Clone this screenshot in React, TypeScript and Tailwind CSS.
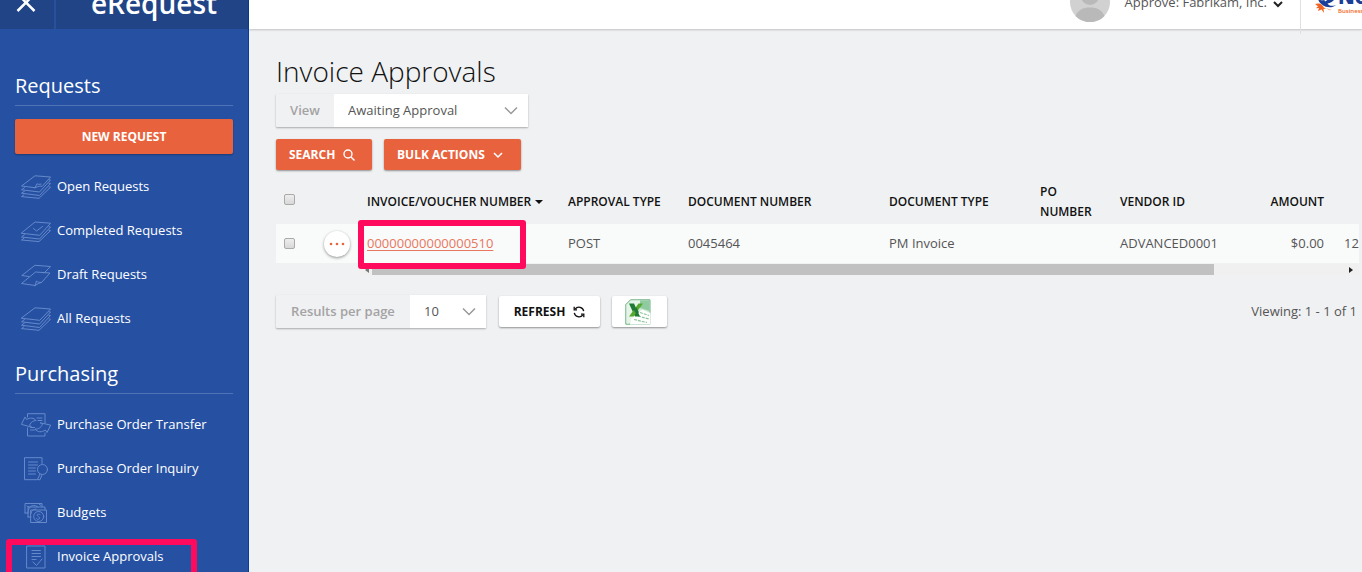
import React from "react";

type IconProps = { children: React.ReactNode };

function NavIcon({ children }: IconProps) {
  return (
    <svg
      className="h-6 w-[30px] shrink-0 text-[#6589ca]"
      viewBox="0 0 30 24"
      fill="none"
      stroke="currentColor"
      strokeWidth="1"
      strokeLinejoin="round"
      strokeLinecap="round"
      aria-hidden="true"
    >
      {children}
    </svg>
  );
}

const icons = {
  open: (
    <NavIcon>
      <path d="M14 12.700.5 11 14 .8 29.600 2 21 11.500c-1.600-.8-3.400-.3-7 1.200z" />
      <path d="M14 12.700l2-4c1 .8 2.400.8 4 .4" />
      <path d="M3.500 12.700.5 14.800l18 2.200L29.500 5l-1.500-.2M3.500 16.200.5 18.200l18 2.300L29.500 8.500l-1.500-.2M3 19.800l-2.500 1.800 17.500 1.700 11.500-11-1.500-.4" />
    </NavIcon>
  ),
  completed: (
    <NavIcon>
      <path d="M.5 14 14 3l15.600 1.200L19 16z" />
      <path d="M12.500 9.500l3 2.500 6-4.500" />
      <path d="M3.500 15.600.5 18l18 2L29.500 8l-1.500-.2M3 19.200.5 21l17.500 1.600 11.500-11-1.500-.4" />
    </NavIcon>
  ),
  draft: (
    <NavIcon>
      <path d="M23 10 29.600 3.500 14 2.300.8 12.500l7.200 1" />
      <path d="M14 22.500.5 20.500 14.500 9l14.500 1-8.500 9.500c-1.500.3-3.500 1-6.500 3z" />
      <path d="M14 22.500l1.500-4.500c1 1 2.500 1.500 5 1.500" />
    </NavIcon>
  ),
  all: (
    <NavIcon>
      <path d="M.5 11 14 .8 29.600 2 19 13z" />
      <path d="M3.500 12.500.5 14.800l18 2.200L29.500 5l-1.500-.2M3.500 16 .5 18.200l18 2.300L29.500 8.500l-1.500-.2M3 19.600l-2.500 2 17.500 1.700 11.500-11-1.500-.4" />
    </NavIcon>
  ),
  transfer: (
    <NavIcon>
      <path d="M6.500 4V.7h17.500V10M6.500 15v8h17.500v-3" />
      <path d="M.6 11 4 4l1.600 2.500C9 4.500 13 4.500 15 7.500c-2.500 0-5 1.500-6.500 4.500l2 2z" />
      <path d="M29.500 12.500 26 19.500l-1.600-2.500c-3.500 2.500-8 2.500-10.400-1 3 .5 6-1.500 7.500-4.500l-2-1.500z" />
      <path d="M16 5h5M17 7.500h4M9.500 14.500h4M9.500 17h4" />
    </NavIcon>
  ),
  inquiry: (
    <NavIcon>
      <path d="M21 6.500V.7H3.500v22h12.500" />
      <path d="M7.500 5h9M7.500 8h9M7.500 11h7M7.500 14h7M7.500 17h7" />
      <circle cx="21.500" cy="12.500" r="5" />
      <path d="M19 17l-2.500 5.500 2.500.3 2-5" />
    </NavIcon>
  ),
  budgets: (
    <NavIcon>
      <path d="M4 12V2.500h17V6M4 12h3M7 16V6h17v3M7 16h3" />
      <rect x="10" y="9" width="15.500" height="12.500" />
      <circle cx="17.700" cy="15.500" r="5" />
      <path d="M7 12c0-4 2-7.500 5.500-7.500S17 6 17 6M10 12.500c0-3 2.500-4.500 5-4.500M19 13.500c-2-1-3.500 0-2.500 1.500s3 1 2 2.500-2.500.8-3 0M6 5l2 1M18 3l2 1.500" />
    </NavIcon>
  ),
  approvals: (
    <NavIcon>
      <path d="M6 1h18v22H6z" />
      <path d="M11 5.500h8.500M11 8.500h8.500M11 11.500h8.500M11 14.500h4" />
      <path d="M12 17l3.500 3.500L21 14" />
    </NavIcon>
  ),
};

const sections = [
  {
    title: "Requests",
    action: "NEW REQUEST",
    items: [
      { label: "Open Requests", icon: icons.open },
      { label: "Completed Requests", icon: icons.completed },
      { label: "Draft Requests", icon: icons.draft },
      { label: "All Requests", icon: icons.all },
    ],
  },
  {
    title: "Purchasing",
    items: [
      { label: "Purchase Order Transfer", icon: icons.transfer },
      { label: "Purchase Order Inquiry", icon: icons.inquiry },
      { label: "Budgets", icon: icons.budgets },
      { label: "Invoice Approvals", icon: icons.approvals, marked: true },
    ],
  },
];

function Sidebar() {
  return (
    <aside className="flex w-[249px] shrink-0 flex-col border-r border-[#0a3c98] bg-[#2651a2] text-white">
      <div className="flex h-[29px] shrink-0 items-end overflow-hidden bg-[#214486]">
        <button
          type="button"
          aria-label="Close menu"
          className="flex h-[29px] w-14 shrink-0 justify-center border-r-2 border-[#28509b] pr-0.5"
        >
          <svg className="h-3 w-5" viewBox="0 0 20 12" fill="none" stroke="currentColor" strokeWidth="2.500" aria-hidden="true">
            <path d="M1.500 11 18.500-6M18.500 11 1.500-6" />
          </svg>
        </button>
        <div className="flex-1 pb-3 pl-1 text-center text-[28px] leading-7 font-semibold">eRequest</div>
      </div>
      <nav className="flex flex-col gap-[19px] px-[15px] pt-[43px]">
        {sections.map((s) => (
          <section key={s.title} className="flex flex-col">
            <h2 className="border-b border-[#5074b8] pb-[5px] text-xl leading-7">{s.title}</h2>
            {s.action && (
              <button
                type="button"
                className="mt-[13px] mb-0.5 h-[35px] rounded-[2px] bg-[#e9623e] text-xs font-bold shadow-[0_1px_2px_rgba(0,0,0,0.3)]"
              >
                {s.action}
              </button>
            )}
            <ul className="mt-[9px]">
              {s.items.map((i) => (
                <li key={i.label} className="relative">
                  <a href="#" className="flex h-11 items-center gap-1.5 pl-1.5 text-[13px] font-medium whitespace-nowrap">
                    {i.icon}
                    {i.label}
                  </a>
                  {"marked" in i && (
                    <span className="pointer-events-none absolute top-1 -left-[9px] h-11 w-[191px] rounded-[3px] border-[6px] border-[#ff0a5c]" />
                  )}
                </li>
              ))}
            </ul>
          </section>
        ))}
      </nav>
    </aside>
  );
}

function TopBar() {
  return (
    <header className="relative flex h-[29px] shrink-0 justify-end bg-white shadow-[0_1px_2px_rgba(0,0,0,0.2)]">
      <div className="flex h-7 items-start overflow-hidden pr-[17px]">
        <svg className="h-[22px] w-10" viewBox="0 0 40 22" aria-hidden="true">
          <circle cx="20" cy="2" r="20" fill="#d1d1d1" />
          <circle cx="20" cy="-4" r="9" fill="#b9b9b9" />
          <path d="M5.500 16C8 10 13 7.500 20 7.500S32 10 34.500 16A20 20 0 0 1 5.500 16z" fill="#b9b9b9" />
        </svg>
        <button type="button" className="-mt-2 ml-[15px] flex items-center gap-1.5 text-[13px] leading-5 text-[#555]">
          Approve: Fabrikam, Inc.
          <svg className="mt-1 h-2 w-2.5" viewBox="0 0 10 8" fill="none" stroke="#222" strokeWidth="2" aria-hidden="true">
            <path d="M1 2l4 4 4-4" />
          </svg>
        </button>
      </div>
      <div className="h-[34px] w-px shrink-0 bg-[#e0e0e0]" />
      <div className="flex h-7 w-[61px] shrink-0 items-start overflow-hidden pl-3.5">
        <svg className="h-3.5 w-[22px] shrink-0" viewBox="0 0 22 14" aria-hidden="true">
          <path d="M3-1c3 2 7 1.500 10-1h7c-1 3-4 5-7.500 5.500C14 6 17 6.500 21 5c-4 3.500-10 2.500-13.500 0C5.500 3.800 4 2 3-1z" fill="#1b3f98" />
          <path d="M0 4c3-1 5.500-.8 7 1 1 1.500 2 3 4 3.500L8.500 9 9 13 6.500 9.500 3 11l1-3-3 .2 2-2z" fill="#f26322" />
          <path d="M9-1h5l-4 2.500z" fill="#fff" />
          <path d="M11 8l6 2-3 .3z" fill="#f8b48c" />
        </svg>
        <div className="-mt-[13px] ml-px whitespace-nowrap">
          <div className="text-[20px] leading-[20px] font-extrabold text-[#1b3f98]">Nolan</div>
          <div className="text-[6px] leading-2 font-semibold text-[#f26322]">Business Solutions</div>
        </div>
      </div>
    </header>
  );
}

function Picker({ id, label, value, labelClass, selectClass }: { id: string; label: string; value: string; labelClass: string; selectClass: string }) {
  return (
    <div className="inline-flex h-[33px] rounded-[1px] text-[13px] shadow-[0_1px_2px_rgba(0,0,0,0.3)]">
      <label htmlFor={id} className={`flex items-center justify-center font-semibold whitespace-nowrap text-[#a3a3a3] ${labelClass}`}>
        {label}
      </label>
      <div className="relative">
        <select id={id} className={`h-full appearance-none bg-white pl-3.5 text-[#555] outline-none ${selectClass}`}>
          <option>{value}</option>
        </select>
        <svg className="pointer-events-none absolute top-3 right-2.5 h-2.5 w-3.5" viewBox="0 0 14 10" fill="none" stroke="#999" strokeWidth="1.500" aria-hidden="true">
          <path d="M1 1.500l6 6 6-6" />
        </svg>
      </div>
    </div>
  );
}

const orange =
  "flex h-[31px] items-center gap-2 rounded-[2px] bg-[#e9623e] pl-[13px] text-xs font-bold text-white shadow-[0_1px_2px_rgba(0,0,0,0.4)]";

function Check({ label }: { label: string }) {
  return (
    <input
      type="checkbox"
      aria-label={label}
      className="block h-[11px] w-[11px] appearance-none rounded-[2px] border border-[#aaa] bg-linear-to-b from-[#eee] to-[#d8d8d8]"
    />
  );
}

function InvoiceTable() {
  return (
    <div className="mt-2.5">
      <div className="relative overflow-hidden">
        <table className="w-full min-w-[1040px] table-fixed border-collapse text-left text-[13px] text-[#555]">
          <colgroup>
            <col className="w-[38px]" />
            <col className="w-[43px]" />
            <col className="w-[201px]" />
            <col className="w-[120px]" />
            <col className="w-[201px]" />
            <col className="w-[151px]" />
            <col className="w-[80px]" />
            <col />
            <col className="w-[100px]" />
            <col className="w-[25px]" />
          </colgroup>
          <thead>
            <tr className="h-11 text-xs leading-5 whitespace-nowrap text-[#111] [&>th]:px-2.5 [&>th]:font-semibold [&>th:first-child]:pl-2">
              <th className="pb-1.5"><Check label="Select all" /></th>
              <th />
              <th aria-sort="descending">
                <span className="flex items-center gap-1">
                  INVOICE/VOUCHER NUMBER
                  <svg className="h-1 w-2" viewBox="0 0 8 4" aria-hidden="true">
                    <path d="M0 0h8L4 4z" fill="#111" />
                  </svg>
                </span>
              </th>
              <th>APPROVAL TYPE</th>
              <th>DOCUMENT NUMBER</th>
              <th>DOCUMENT TYPE</th>
              <th className="whitespace-normal">PO NUMBER</th>
              <th>VENDOR ID</th>
              <th className="text-right">AMOUNT</th>
              <th />
            </tr>
          </thead>
          <tbody>
            <tr className="h-[39px] bg-[#f9fafa] whitespace-nowrap [&>td]:px-2.5 [&>td:first-child]:pl-2">
              <td><Check label="Select invoice" /></td>
              <td>
                <button
                  type="button"
                  aria-label="Row actions"
                  className="flex h-[26px] w-[26px] items-center justify-center rounded-full bg-white shadow-[0_1px_3px_rgba(0,0,0,0.4)]"
                >
                  <svg className="h-1 w-4" viewBox="0 0 16 4" fill="#e9623e" aria-hidden="true">
                    <circle cx="2" cy="2" r="1.300" />
                    <circle cx="8" cy="2" r="1.300" />
                    <circle cx="14" cy="2" r="1.300" />
                  </svg>
                </button>
              </td>
              <td>
                <a href="#" className="text-[#e8775f] underline underline-offset-2">00000000000000510</a>
              </td>
              <td>POST</td>
              <td>0045464</td>
              <td>PM Invoice</td>
              <td />
              <td>ADVANCED0001</td>
              <td className="text-right">$0.00</td>
              <td>12</td>
            </tr>
          </tbody>
        </table>
      </div>
      <div className="relative mt-px ml-[83px] flex h-[11px] items-center justify-between bg-[#f0f0f0] px-1.5">
        <svg className="h-1.5 w-1" viewBox="0 0 4 6" aria-hidden="true"><path d="M4 0v6L0 3z" fill="#777" /></svg>
        <div className="mr-[135px] ml-[3px] h-full flex-1 bg-[#c1c1c1]" />
        <svg className="h-1.5 w-1" viewBox="0 0 4 6" aria-hidden="true"><path d="M0 0v6l4-3z" fill="#222" /></svg>
        <span className="pointer-events-none absolute -left-px bottom-1.5 h-[49px] w-[168px] rounded-[3px] border-[6px] border-[#ff0a5c]" />
      </div>
    </div>
  );
}

function ExcelIcon() {
  return (
    <svg className="h-[26px] w-[26px]" viewBox="0 0 26 26" aria-hidden="true">
      <path d="M5.500.8H25v24.400H.8V5.500z" fill="#cfe9d5" stroke="#6fae82" />
      <path d="M15 1.500h9.500V12L15 9z" fill="#8fcba0" />
      <path d="M1.500 6 6 1.500h9V9L4 24.500H1.500z" fill="#e4f4e8" />
      <path d="M17 10.500l8.500 3.500v11.500H5L6 20z" fill="#fff" />
      <path d="M15 13.500l9 3M13 17l11 3M9 20.500l13 3" stroke="#8dc49a" strokeWidth="1.200" strokeDasharray="3 1" fill="none" />
      <path d="M4 4.500h5l6 13h-5z" fill="#1f7a35" />
      <path d="M13.500 4.500H18L8.500 17.500H4z" fill="#57a82f" />
      <path d="M8 9.500l3.500-1 2.500 5-3 1z" fill="#1f7a35" />
    </svg>
  );
}

function Pager() {
  return (
    <div className="mt-5 flex items-center">
      <Picker id="per-page" label="Results per page" value="10" labelClass="w-[134px]" selectClass="w-[76px]" />
      <button
        type="button"
        className="ml-[13px] flex h-[31px] w-[101px] items-center justify-center gap-2 rounded-[2px] bg-white text-xs font-bold text-[#111] shadow-[0_1px_2px_rgba(0,0,0,0.4)]"
      >
        REFRESH
        <svg className="h-3 w-3" viewBox="0 0 12 12" fill="none" stroke="#111" strokeWidth="1.300" aria-hidden="true">
          <path d="M10.700 5.200A4.800 4.800 0 0 0 2.200 3M1.300 6.800A4.800 4.800 0 0 0 9.800 9" />
          <path d="M1.200.8v3H4M10.800 11.200v-3H8" />
        </svg>
      </button>
      <button
        type="button"
        aria-label="Export to Excel"
        className="ml-3 flex h-[31px] w-[55px] items-center justify-center rounded-[2px] bg-white pr-1 shadow-[0_1px_2px_rgba(0,0,0,0.4)]"
      >
        <ExcelIcon />
      </button>
      <div className="ml-auto pr-0.5 text-[13px] text-[#555]">Viewing: 1 - 1 of 1</div>
    </div>
  );
}

export default function App() {
  return (
    <div className="flex h-screen overflow-hidden bg-[#f0f1f3] font-['Open_Sans','Noto_Sans',sans-serif]">
      <Sidebar />
      <div className="flex min-w-0 flex-1 flex-col">
        <TopBar />
        <main className="pt-[22px] pr-[3px] pl-[27px]">
          <h1 className="text-[28px] leading-10 font-light text-[#111]">Invoice Approvals</h1>
          <div className="mt-[3px] flex">
            <Picker id="view" label="View" value="Awaiting Approval" labelClass="w-[58px]" selectClass="w-[194px]" />
          </div>
          <div className="mt-3 flex gap-3">
            <button type="button" className={`w-24 ${orange}`}>
              SEARCH
              <svg className="h-3 w-3" viewBox="0 0 12 12" fill="none" stroke="currentColor" strokeWidth="1.400" aria-hidden="true">
                <circle cx="5" cy="5" r="4" />
                <path d="M8 8l3.500 3.500" />
              </svg>
            </button>
            <button type="button" className={`w-[137px] ${orange}`}>
              BULK ACTIONS
              <svg className="h-2 w-2.5" viewBox="0 0 10 8" fill="none" stroke="currentColor" strokeWidth="1.500" aria-hidden="true">
                <path d="M1 2l4 4 4-4" />
              </svg>
            </button>
          </div>
          <InvoiceTable />
          <Pager />
        </main>
      </div>
    </div>
  );
}
